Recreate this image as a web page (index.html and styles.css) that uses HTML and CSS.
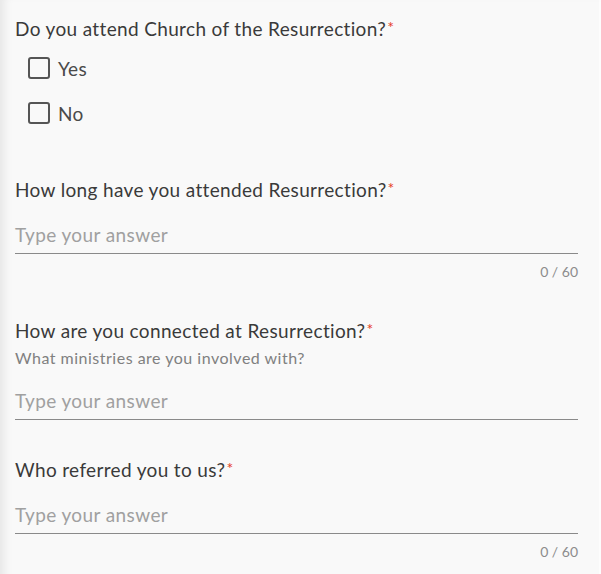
FILE: index.html
```html
<!DOCTYPE html>
<html lang="en">
<head>
    <meta charset="UTF-8">
    <meta name="viewport" content="width=device-width, initial-scale=1.0">
    <title>Connect Form</title>
    <link rel="stylesheet" href="styles.css">
</head>
<body>
    <form class="form">
        <div class="field field-choice">
            <p class="question">Do you attend Church of the Resurrection?<span class="req">*</span></p>
            <label class="option"><span class="box"></span>Yes</label>
            <label class="option"><span class="box"></span>No</label>
        </div>

        <div class="field">
            <p class="question">How long have you attended Resurrection?<span class="req">*</span></p>
            <div class="answer">Type your answer</div>
            <div class="count">0 / 60</div>
        </div>

        <div class="field">
            <p class="question">How are you connected at Resurrection?<span class="req">*</span></p>
            <p class="hint">What ministries are you involved with?</p>
            <div class="answer">Type your answer</div>
        </div>

        <div class="field">
            <p class="question">Who referred you to us?<span class="req">*</span></p>
            <div class="answer">Type your answer</div>
            <div class="count">0 / 60</div>
        </div>
    </form>
</body>
</html>
```

FILE: styles.css
```css
body {
    margin: 0;
    background-color: #f9f9f9;
    font-family: Lato, "Open Sans", sans-serif;
    color: #333;
    min-height: 574px;
    box-shadow: inset 10px 0 10px -6px rgba(0,0,0,0.08), inset -2px 0 0 #fdfdfd;
}
.form {
    padding: 17px 23px 0 15px;
}
.field {
    margin-bottom: 38px;
}
.field-choice {
    margin-bottom: 54px;
}
.question {
    margin: 0;
    font-size: 19px;
    letter-spacing: 0.35px;
    line-height: 24px;
    color: #3a3a3a;
}
.req {
    margin-left: 1px;
    color: #e63c28;
    font-size: 16px;
    line-height: 0;
    vertical-align: 3px;
}
.hint {
    margin: 5px 0 0;
    font-size: 16px;
    letter-spacing: 0.5px;
    line-height: 20px;
    color: #808080;
}
.option {
    display: flex;
    align-items: center;
    gap: 8px;
    margin: 16px 0 0 13px;
    height: 22px;
    font-size: 19px;
    letter-spacing: 0.3px;
    color: #4a4a4a;
}
.option + .option {
    margin-top: 23px;
}
.box {
    width: 18px;
    height: 18px;
    border: 2px solid #555;
    border-radius: 3px;
}
.answer {
    margin-top: 15px;
    padding: 6px 0;
    border-bottom: 1px solid #8a8a8a;
    font-size: 19px;
    letter-spacing: 0.4px;
    line-height: 24px;
    color: #a0a0a0;
}
.count {
    margin-top: 9px;
    text-align: right;
    font-size: 14px;
    line-height: 18px;
    color: #8c8c8c;
}
```
